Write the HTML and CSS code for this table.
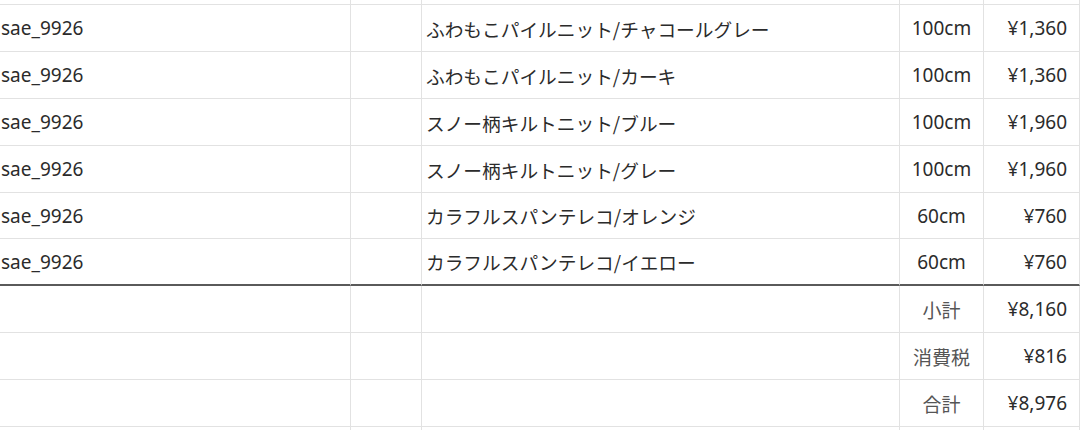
FILE: index.html
```html
<!DOCTYPE html>
<html lang="ja">
<head>
<meta charset="utf-8">
<link rel="stylesheet" href="styles.css">
</head>
<body>
<div class="sheet">
  <div class="row top"><div class="c c1"></div><div class="c c2"></div><div class="c c3"></div><div class="c c4"></div><div class="c c5"></div></div>
  <div class="row"><div class="c c1">sae_9926</div><div class="c c2"></div><div class="c c3">ふわもこパイルニット/チャコールグレー</div><div class="c c4">100cm</div><div class="c c5">¥1,360</div></div>
  <div class="row"><div class="c c1">sae_9926</div><div class="c c2"></div><div class="c c3">ふわもこパイルニット/カーキ</div><div class="c c4">100cm</div><div class="c c5">¥1,360</div></div>
  <div class="row"><div class="c c1">sae_9926</div><div class="c c2"></div><div class="c c3">スノー柄キルトニット/ブルー</div><div class="c c4">100cm</div><div class="c c5">¥1,960</div></div>
  <div class="row"><div class="c c1">sae_9926</div><div class="c c2"></div><div class="c c3">スノー柄キルトニット/グレー</div><div class="c c4">100cm</div><div class="c c5">¥1,960</div></div>
  <div class="row short"><div class="c c1">sae_9926</div><div class="c c2"></div><div class="c c3">カラフルスパンテレコ/オレンジ</div><div class="c c4">60cm</div><div class="c c5">¥760</div></div>
  <div class="row total-line"><div class="c c1">sae_9926</div><div class="c c2"></div><div class="c c3">カラフルスパンテレコ/イエロー</div><div class="c c4">60cm</div><div class="c c5">¥760</div></div>
  <div class="row"><div class="c c1"></div><div class="c c2"></div><div class="c c3"></div><div class="c c4 label">小計</div><div class="c c5">¥8,160</div></div>
  <div class="row"><div class="c c1"></div><div class="c c2"></div><div class="c c3"></div><div class="c c4 label">消費税</div><div class="c c5">¥816</div></div>
  <div class="row"><div class="c c1"></div><div class="c c2"></div><div class="c c3"></div><div class="c c4 label">合計</div><div class="c c5">¥8,976</div></div>
  <div class="row bottom"><div class="c c1"></div><div class="c c2"></div><div class="c c3"></div><div class="c c4"></div><div class="c c5"></div></div>
</div>
</body>
</html>
```

FILE: styles.css
```css
html, body {
  margin: 0;
  padding: 0;
  background: #ffffff;
}

.sheet {
  width: 1080px;
  height: 430px;
  overflow: hidden;
  font-family: "Noto Sans", "Noto Sans CJK JP", sans-serif;
  font-size: 19px;
  color: #2b2b2b;
}

.row {
  display: flex;
  height: 47px;
}

.row.short {
  height: 46px;
}

.row.top {
  height: 5px;
}

.row.bottom {
  height: 10px;
}

.c {
  box-sizing: border-box;
  height: 100%;
  border-right: 1px solid #e2e2e2;
  border-bottom: 1px solid #e2e2e2;
  display: flex;
  align-items: center;
  white-space: nowrap;
  overflow: hidden;
}

.row.total-line .c {
  border-bottom: 2px solid #5a5a5a;
}

.c1 {
  width: 351px;
  padding-left: 1px;
}

.c2 {
  width: 71px;
}

.c3 {
  width: 478px;
  padding-left: 4px;
  font-family: "Noto Sans CJK JP", sans-serif;
  font-size: 18.7px;
}

.c4 {
  width: 84px;
  justify-content: center;
}

.c5 {
  width: 96px;
  justify-content: flex-end;
  padding-right: 12px;
}

.label {
  font-family: "Noto Sans CJK JP", sans-serif;
  font-size: 19px;
  color: #555555;
}
```
